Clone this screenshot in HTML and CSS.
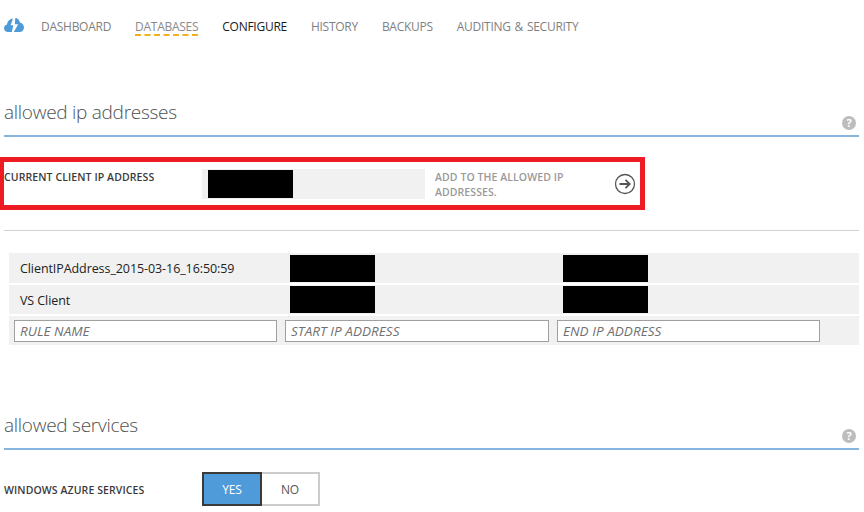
FILE: index.html
```html
<!DOCTYPE html>
<html lang="en">
<head>
    <meta charset="UTF-8">
    <title>Configure | SQL Database</title>
    <link rel="stylesheet" href="styles.css">
</head>
<body>
    <nav class="tabs">
        <svg class="cloud-logo" width="20" height="16" viewBox="0 0 20 16">
            <path fill="#4f9bd9" d="M4 15C1.800 15 0 13.400 0 11.300C0 9.500 1.200 8 3 7.600C3.400 4.300 5.800 1.800 9 1.500L6.600 8.300H9.400L7.800 15ZM11.300 1C13.600 1 15.400 3 15.800 5.400C18.200 5.600 20 8 20 10.500C20 13 18 15 15.800 15H9.800L14.200 7.300H10.900Z"/>
        </svg>
        <a class="tab">DASHBOARD</a>
        <a class="tab tab-db">DATABASES</a>
        <a class="tab tab-active">CONFIGURE</a>
        <a class="tab">HISTORY</a>
        <a class="tab">BACKUPS</a>
        <a class="tab">AUDITING &amp; SECURITY</a>
    </nav>

    <section class="ip-section">
        <div class="section-head">
            <h2>allowed ip addresses</h2>
            <span class="help">?</span>
        </div>
        <div class="client-box">
            <div class="field-label">CURRENT CLIENT IP ADDRESS</div>
            <div class="client-ip"><div class="redacted"></div></div>
            <div class="add-text">ADD TO THE ALLOWED IP ADDRESSES.</div>
            <svg class="add-arrow" width="22" height="22" viewBox="0 0 22 22">
                <circle cx="11" cy="11" r="9.500" fill="none" stroke="#555" stroke-width="1.300"/>
                <path fill="none" stroke="#555" stroke-width="1.800" d="M5.500 11H15.500M11.500 6.800L15.700 11L11.500 15.200"/>
            </svg>
        </div>
        <hr class="divider">
        <div class="rules">
            <div class="rule-row">
                <div class="rule-name">ClientIPAddress_2015-03-16_16:50:59</div>
                <div class="redacted"></div>
                <div class="redacted redacted-end"></div>
            </div>
            <div class="rule-row">
                <div class="rule-name">VS Client</div>
                <div class="redacted"></div>
                <div class="redacted redacted-end"></div>
            </div>
            <div class="rule-inputs">
                <input type="text" placeholder="RULE NAME">
                <input type="text" class="input-wide" placeholder="START IP ADDRESS">
                <input type="text" placeholder="END IP ADDRESS">
            </div>
        </div>
    </section>

    <section class="services-section">
        <div class="section-head">
            <h2>allowed services</h2>
            <span class="help">?</span>
        </div>
        <div class="service-row">
            <div class="field-label">WINDOWS AZURE SERVICES</div>
            <div class="toggle">
                <span class="toggle-yes">YES</span>
                <span class="toggle-no">NO</span>
            </div>
        </div>
    </section>
</body>
</html>
```

FILE: styles.css
```css
html, body {
    margin: 0;
    padding: 0;
    background: #fff;
    height: 512px;
    overflow: hidden;
    font-family: "Open Sans", "Noto Sans", Arial, sans-serif;
}
.tabs {
    display: flex;
    align-items: flex-start;
    height: 52px;
    padding: 17px 0 0 4px;
    box-sizing: border-box;
    font-size: 12px;
    letter-spacing: -0.27px;
    word-spacing: 1px;
    color: #7f7f7f;
}
.cloud-logo {
    margin-right: 17px;
}
.tab {
    line-height: 14px;
    margin: 3px 24px 0 0;
}
.tab-db {
    color: #8a8a8a;
    border-bottom: 2px dashed #f2b01e;
}
.tab-active {
    color: #1a1a1a;
}
.ip-section {
    padding: 0 5px 0 4px;
}
.section-head {
    position: relative;
    height: 85px;
    box-sizing: border-box;
    padding-top: 46px;
    border-bottom: 2px solid #85b5e0;
}
.section-head h2 {
    margin: 0;
    font-size: 19px;
    line-height: 28px;
    font-weight: 300;
    letter-spacing: -0.27px;
    color: #4f4f4f;
}
.help {
    position: absolute;
    right: 3px;
    bottom: 5px;
    width: 14px;
    height: 14px;
    border-radius: 50%;
    background: #bdbdbd;
    color: #fff;
    font-size: 11px;
    font-weight: 700;
    line-height: 14px;
    text-align: center;
}
.client-box {
    display: flex;
    width: 645px;
    height: 53px;
    box-sizing: border-box;
    margin: 20px 0 0 -4px;
    border: 5px solid #ed1c24;
    border-left-width: 4px;
}
.field-label {
    font-size: 10.500px;
    font-weight: 600;
    letter-spacing: 0.1px;
    color: #3a3a3a;
}
.client-box .field-label {
    width: 198px;
    line-height: 14px;
    margin-top: 8px;
}
.client-ip {
    width: 223px;
    height: 30px;
    margin-top: 7px;
    padding: 1px 0 1px 6px;
    box-sizing: border-box;
    background: #f1f1f1;
}
.redacted {
    width: 85px;
    height: 28px;
    background: #000;
}
.add-text {
    width: 160px;
    margin: 8px 0 0 10px;
    font-size: 10.500px;
    font-weight: 600;
    line-height: 15px;
    letter-spacing: 0.08px;
    color: #999;
}
.add-arrow {
    margin: 11px 0 0 19px;
}
.divider {
    height: 1px;
    margin: 20px 0 22px;
    border: 0;
    background: #d2d2d2;
}
.rules {
    margin-left: 5px;
    font-size: 12.500px;
    letter-spacing: -0.08px;
    color: #222;
}
.rule-row {
    display: flex;
    align-items: center;
    height: 30px;
    margin-bottom: 2px;
    background: #f1f1f1;
}
.rule-row + .rule-row {
    height: 29px;
}
.rule-name {
    width: 270px;
    padding-left: 11px;
    padding-top: 1px;
}
.rule-row .redacted {
    height: 27px;
}
.redacted-end {
    margin-left: 188px;
}
.rule-inputs {
    display: flex;
    gap: 8px;
    height: 29px;
    padding: 4px 5px 0;
    box-sizing: border-box;
    background: #f1f1f1;
}
.rule-inputs input {
    width: 263px;
    height: 22px;
    padding: 0 5px;
    box-sizing: border-box;
    border: 1px solid #a0a0a0;
    background: #fff;
    font-family: inherit;
    font-size: 13.500px;
    letter-spacing: 0.05px;
}
.rule-inputs .input-wide {
    width: 264px;
}
.rule-inputs input::placeholder {
    font-style: italic;
    color: #707070;
    opacity: 1;
}
.services-section {
    padding: 0 5px 0 4px;
    margin-top: 20px;
}
.service-row {
    display: flex;
    align-items: center;
    margin-top: 22px;
}
.service-row .field-label {
    width: 198px;
    padding-top: 1px;
}
.toggle {
    display: flex;
    height: 34px;
    font-size: 12px;
    letter-spacing: -0.2px;
    line-height: 31px;
    text-align: center;
}
.toggle-yes {
    width: 60px;
    box-sizing: border-box;
    border: 2px solid #3a3a3a;
    background: #4f9bd9;
    color: #fff;
}
.toggle-no {
    width: 58px;
    box-sizing: border-box;
    border: 2px solid #ccc;
    border-left: 0;
    color: #555;
}
```
